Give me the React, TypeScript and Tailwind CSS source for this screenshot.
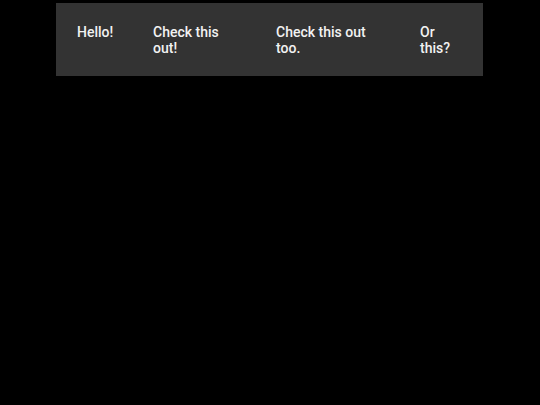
const items = [
  { label: "Hello!", col: "w-[76px]", text: "max-w-[70px]" },
  { label: "Check this out!", col: "w-[123px]", text: "max-w-[90px]" },
  { label: "Check this out too.", col: "w-[144px]", text: "max-w-[112px]" },
  { label: "Or this?", col: "w-[60px]", text: "max-w-[40px]" },
];

export default function App() {
  return (
    <div className="min-h-screen bg-black pt-[3px]">
      <nav className="ml-[56px] flex h-[73px] w-[427px] items-start bg-[#333333] pl-[21px] pt-[21px] font-['Roboto',sans-serif] text-[14px] font-medium leading-[16px] text-[#f2f2f2]">
        {items.map((item) => (
          <div key={item.label} className={item.col}>
            <p className={item.text}>{item.label}</p>
          </div>
        ))}
      </nav>
    </div>
  );
}
